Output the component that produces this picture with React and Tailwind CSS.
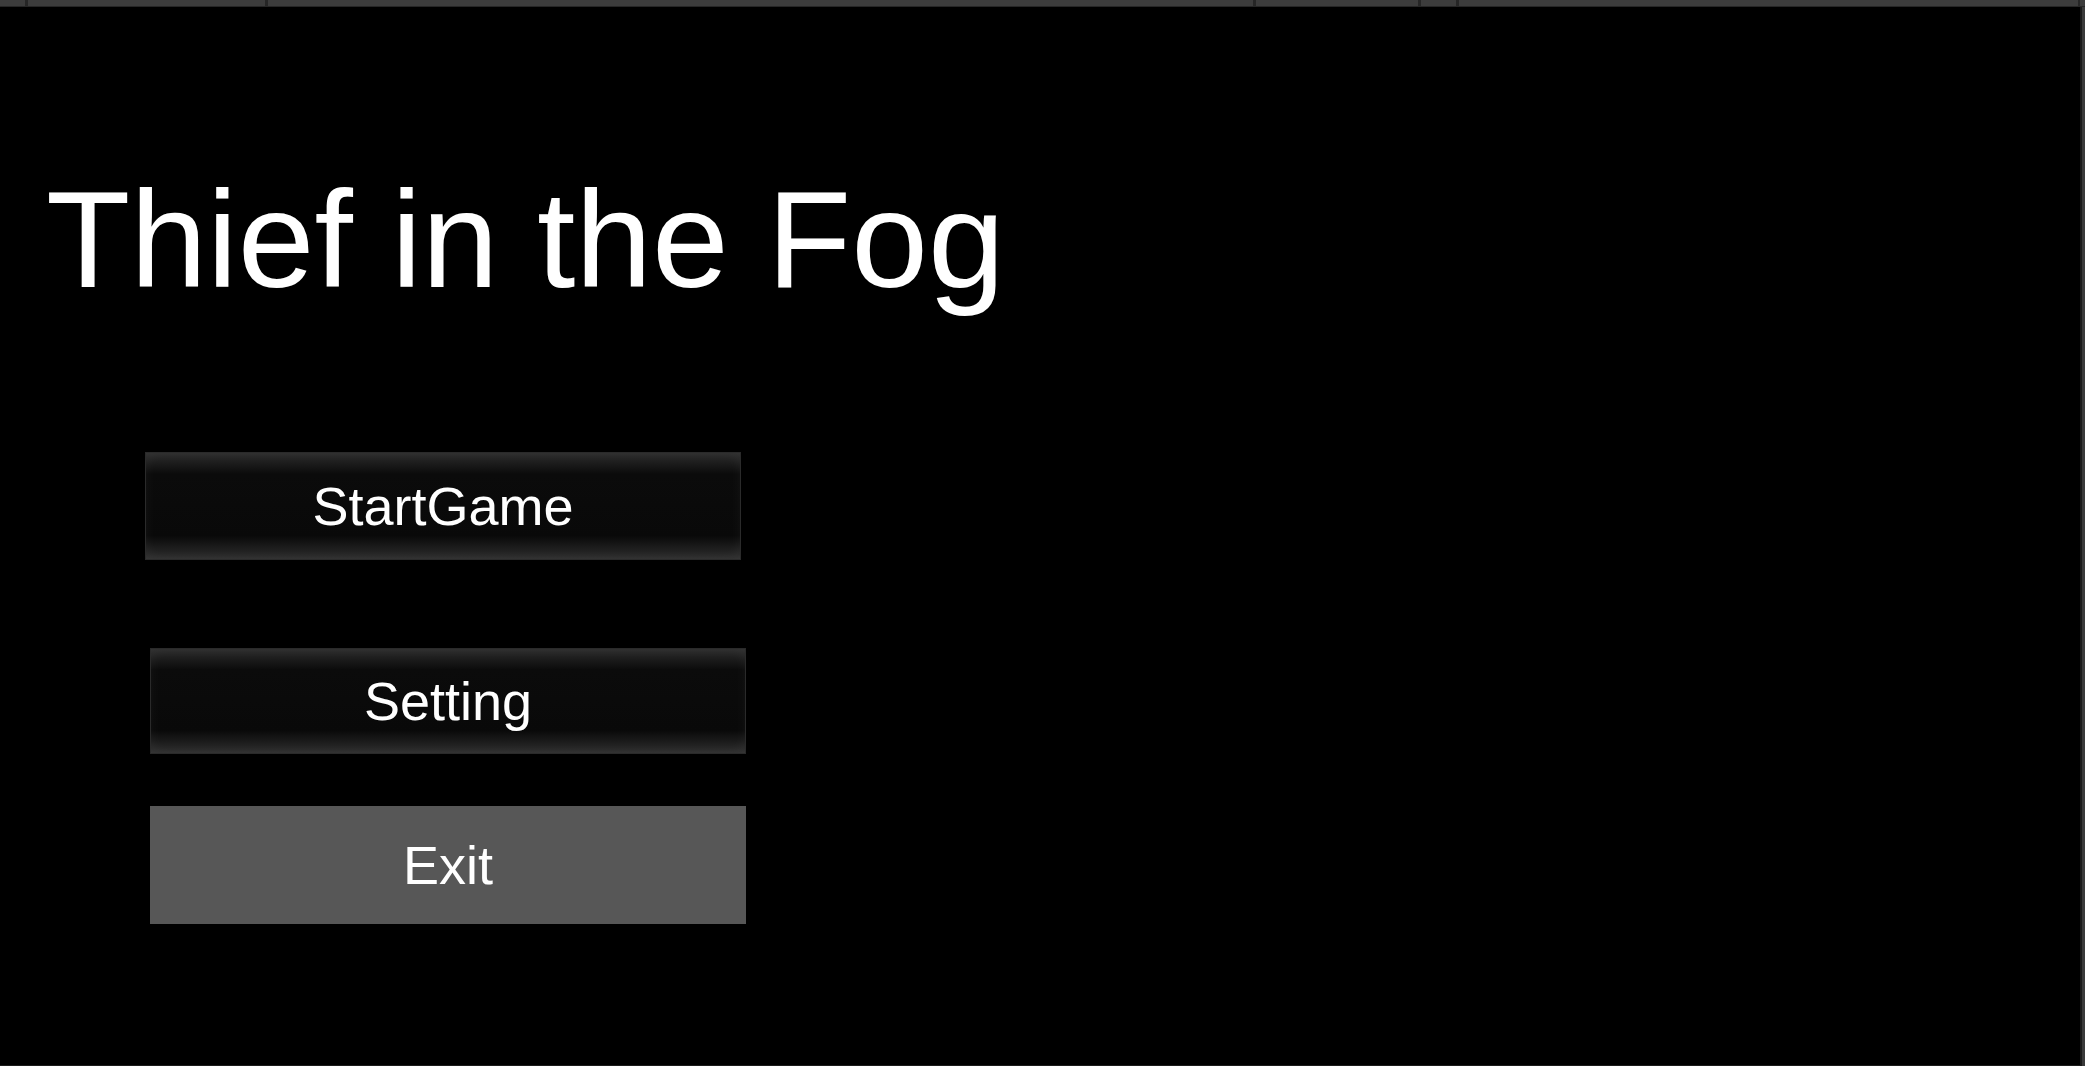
export default function App() {
  const dividers = [25, 265, 1253, 1418, 1456];

  return (
    <div className="w-[2085px] h-[1066px] bg-black flex flex-col overflow-hidden font-['Liberation_Sans',Arial,sans-serif] text-white">
      {/* editor toolbar strip */}
      <div className="relative h-[7px] bg-[#3c3c3c] border-b border-[#262626] shrink-0">
        {dividers.map((x) => (
          <div key={x} className="absolute top-0 h-[6px] w-[3px] bg-[#262626]" style={{ left: x }} />
        ))}
        <div className="absolute top-0 left-[2078px] h-[7px] w-[2px] bg-[#262626]" />
      </div>

      <div className="flex flex-1 min-h-0">
        <main className="flex-1 flex flex-col border-b border-[#1c1c1c]">
          <h1 className="mt-[163px] ml-[46px] text-[138px] leading-none font-normal">
            Thief in the Fog
          </h1>

          <div className="flex flex-col mt-[144px]">
            <button className="ml-[145px] w-[596px] h-[108px] border border-[#2a2a2a] bg-[linear-gradient(to_bottom,#2c2c2c,#0b0b0b_20%,#090909_78%,#2e2e2e)] shadow-[inset_0_0_14px_rgba(255,255,255,0.05)] text-[54px] leading-none flex items-center justify-center">
              StartGame
            </button>
            <button className="ml-[150px] mt-[88px] w-[596px] h-[106px] border border-[#2a2a2a] bg-[linear-gradient(to_bottom,#2c2c2c,#0b0b0b_20%,#090909_78%,#2e2e2e)] shadow-[inset_0_0_14px_rgba(255,255,255,0.05)] text-[54px] leading-none flex items-center justify-center">
              Setting
            </button>
            <button className="ml-[150px] mt-[52px] w-[596px] h-[118px] bg-[#575757] text-[54px] leading-none flex items-center justify-center">
              Exit
            </button>
          </div>
        </main>
        <div className="w-[5px] border-l-2 border-[#1a1a1a] bg-[#3a3a3a]" />
      </div>
    </div>
  );
}
